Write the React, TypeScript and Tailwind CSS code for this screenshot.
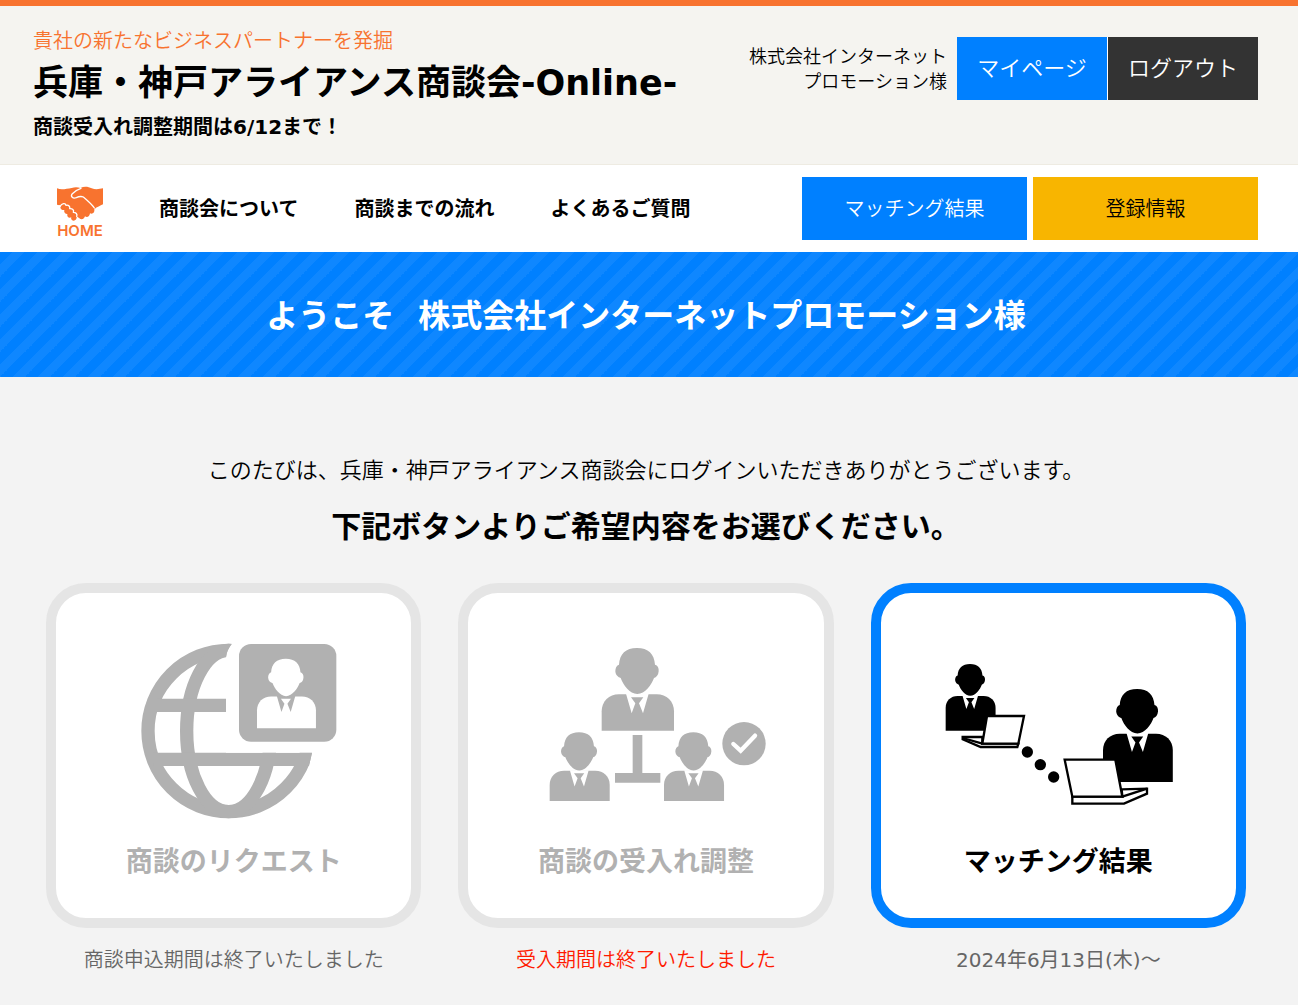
import type { ReactNode } from "react";

interface PersonProps {
  x: number;
  y: number;
  scale: number;
  height?: number;
  shirt?: string;
}

interface Card {
  title: string;
  note: string;
  noteClass: string;
  boxClass: string;
  icon: ReactNode;
}

const navLinks = ["商談会について", "商談までの流れ", "よくあるご質問"];

function Person({ x, y, scale, height = 248, shirt = "#fff" }: PersonProps) {
  return (
    <g transform={`translate(${x} ${y}) scale(${scale})`}>
      <path d={`M0 ${height} V190 C0 160 22 139 52 139 H165 C195 139 217 160 217 190 V${height} Z`} />
      <path fill={shirt} d="M73 137 H141 L124 196 L112 166 L125 148 H88 L101 166 L90 196 Z" />
      <path d="M106 0 C140 0 158 18 160 50 C168 52 172 60 171 70 C170 82 164 88 157 90 C150 110 130 138 107 138 C84 138 64 110 57 90 C50 88 42 82 41 70 C41 60 45 52 52 50 C54 18 72 0 106 0 Z" />
    </g>
  );
}

function RequestIcon() {
  return (
    <svg className="h-[200px] w-[260px]" viewBox="-78 0 780 600" fill="#b1b1b1" aria-hidden="true">
      <clipPath id="globe">
        <path d="M0 0 H305 V42 C295 55 290 66 288 82 V368 H546 L537 408 V600 H0 Z" />
      </clipPath>
      <g clipPath="url(#globe)" fill="none" stroke="#b1b1b1" strokeWidth="40">
        <circle cx="296" cy="303" r="242" />
        <ellipse cx="296" cy="303" rx="126" ry="242" />
        <path d="M80 226 H288 M70 388 H546" />
      </g>
      <rect x="327" y="42" width="292" height="293" rx="36" />
      <g fill="#fff">
        <Person x={381} y={86} scale={0.815} height={256} shirt="#b1b1b1" />
      </g>
    </svg>
  );
}

function AdjustIcon() {
  return (
    <svg className="h-[200px] w-[260px]" viewBox="-72 0 780 600" fill="#b1b1b1" aria-hidden="true">
      <Person x={185} y={54} scale={1} />
      <Person x={29} y={307} scale={0.83} />
      <Person x={372} y={307} scale={0.83} />
      <path d="M278 315 H307 V429 H361 V458 H225 V429 H278 Z" />
      <circle cx="612" cy="341" r="65" />
      <path d="M580 342 L602 362 L645 317" fill="none" stroke="#fff" strokeWidth="13" strokeLinecap="round" />
    </svg>
  );
}

function MatchingIcon() {
  return (
    <svg className="h-[200px] w-[260px]" viewBox="-6 -60 780 600" aria-hidden="true">
      <Person x={47} y={42} scale={0.69} height={290} />
      <Person x={519} y={117} scale={0.965} height={289} />
      <g fill="#fff" stroke="#000" strokeWidth="7">
        <path d="M157 261 H98 V268 L152 291 H262 L265 281 H157 Z" />
        <path d="M98 264 L157 281" />
        <path d="M171 198 H282 L265 281 H157 Z" />
        <path d="M575 418 L651 416 V431 L582 461 H427 V440 H577 Z" />
        <path d="M577 440 L651 416" />
        <path d="M404 329 H556 L577 440 H427 Z" />
      </g>
      <circle cx="292" cy="306" r="17" />
      <circle cx="331" cy="344" r="17" />
      <circle cx="371" cy="381" r="17" />
    </svg>
  );
}

function HandshakeIcon() {
  return (
    <svg className="h-[36px] w-[46px]" viewBox="0 0 138 108" aria-hidden="true">
      <path
        fill="#f8732f"
        d="M0 7 C14 13 28 8 44 6 C54 3 64 4 70 6 C82 0 94 2 104 7 C116 12 128 9 138 7 V55 C130 60 120 62 112 70 C114 80 106 86 99 82 C98 92 90 96 84 91 C81 100 73 102 67 97 L59 91 C61 102 50 108 44 101 C42 98 42 96 43 94 C36 98 29 92 31 84 C24 84 20 79 22 72 C14 74 7 66 12 59 C9 57 5 57 0 56 Z"
      />
      <g fill="none" stroke="#fff" strokeWidth="4" strokeLinecap="round" strokeLinejoin="round">
        <path d="M72 7 C60 11 52 17 46 23 C39 32 48 39 58 35 C66 31 72 30 79 33 C92 44 105 55 112 66" />
        <path d="M9 61 C15 52 25 50 27 58 C35 56 40 62 38 68 C46 67 52 72 49 79 C57 79 62 84 59 91" />
      </g>
    </svg>
  );
}

const cards: Card[] = [
  {
    title: "商談のリクエスト",
    note: "商談申込期間は終了いたしました",
    noteClass: "font-[350] text-[#666]",
    boxClass: "border-[#e5e5e5] text-[#b1b1b1]",
    icon: <RequestIcon />,
  },
  {
    title: "商談の受入れ調整",
    note: "受入期間は終了いたしました",
    noteClass: "font-[350] text-[#ff1a00]",
    boxClass: "border-[#e5e5e5] text-[#b1b1b1]",
    icon: <AdjustIcon />,
  },
  {
    title: "マッチング結果",
    note: "2024年6月13日(木)～",
    noteClass: "font-normal text-[#666]",
    boxClass: "border-[#0080ff] text-black",
    icon: <MatchingIcon />,
  },
];

export default function App() {
  return (
    <div
      lang="ja"
      className="min-h-screen bg-[#f3f3f3] font-['DejaVu_Sans','Noto_Sans_CJK_JP',sans-serif] text-black"
    >
      <header>
        <div className="flex items-start justify-between border-t-[6px] border-b border-t-[#f8732f] border-b-[#eeebe2] bg-[#f5f4f0] pr-10 pb-[22px] pl-[33px]">
          <div className="pt-5">
            <p className="text-[20px] leading-[30px] font-[350] text-[#f8732f]">貴社の新たなビジネスパートナーを発掘</p>
            <h1 className="text-[35px] leading-[54px] font-bold">兵庫・神戸アライアンス商談会-Online-</h1>
            <p className="mt-[2px] text-[20px] leading-[30px] font-bold">商談受入れ調整期間は6/12まで！</p>
          </div>
          <div className="flex items-center pt-[31px]">
            <p className="mr-[10px] text-right text-[18px] leading-[25px] font-[350]">
              株式会社インターネット
              <br />
              プロモーション様
            </p>
            <div className="flex gap-px bg-white text-[22px] font-[350] text-white">
              <a href="#mypage" className="flex h-[63px] w-[150px] items-center justify-center bg-[#0080ff]">
                マイページ
              </a>
              <a href="#logout" className="flex h-[63px] w-[150px] items-center justify-center bg-[#333]">
                ログアウト
              </a>
            </div>
          </div>
        </div>

        <nav className="flex items-center justify-between bg-white py-3 pr-10 pl-[57px]">
          <div className="flex items-center gap-14 text-[20px] font-bold">
            <a href="#home" className="flex flex-col items-center pt-2 text-[#f8732f]">
              <HandshakeIcon />
              <span className="font-['Inter',sans-serif] text-[15px] leading-[18px] font-semibold">HOME</span>
            </a>
            {navLinks.map((label) => (
              <a key={label} href="#guide">
                {label}
              </a>
            ))}
          </div>
          <div className="flex gap-[6px] text-[20px] font-[350]">
            <a href="#result" className="flex h-[63px] w-[225px] items-center justify-center bg-[#0080ff] text-white">
              マッチング結果
            </a>
            <a href="#profile" className="flex h-[63px] w-[225px] items-center justify-center bg-[#f8b500]">
              登録情報
            </a>
          </div>
        </nav>
      </header>

      <div className="bg-[#0080ff] bg-[linear-gradient(-45deg,#0f87ff_25%,transparent_25%,transparent_50%,#0f87ff_50%,#0f87ff_75%,transparent_75%)] bg-[length:25px_25px] pt-10 pr-[6px] pb-9">
        <h2 className="flex justify-center gap-6 text-[32px] leading-[49px] font-bold text-white">
          <span>ようこそ</span>
          <span>株式会社インターネットプロモーション様</span>
        </h2>
      </div>

      <main className="pt-[77px] pr-[52px] pb-7 pl-[46px] text-center">
        <p className="text-[22px] leading-[34px] font-[350]">
          このたびは、兵庫・神戸アライアンス商談会にログインいただきありがとうございます。
        </p>
        <p className="mt-4 text-[30px] leading-[46px] font-bold">下記ボタンよりご希望内容をお選びください。</p>

        <ul className="mx-auto mt-[33px] grid max-w-[1200px] grid-cols-3 gap-[37px]">
          {cards.map((card) => (
            <li key={card.title}>
              <a
                href="#menu"
                className={`flex flex-col items-center rounded-[40px] border-[10px] bg-white pt-[37px] pb-9 ${card.boxClass}`}
              >
                {card.icon}
                <h3 className="mt-3 text-[27px] leading-[40px] font-bold">{card.title}</h3>
              </a>
              <p className={`mt-[17px] text-[20px] leading-[30px] ${card.noteClass}`}>{card.note}</p>
            </li>
          ))}
        </ul>
      </main>
    </div>
  );
}
